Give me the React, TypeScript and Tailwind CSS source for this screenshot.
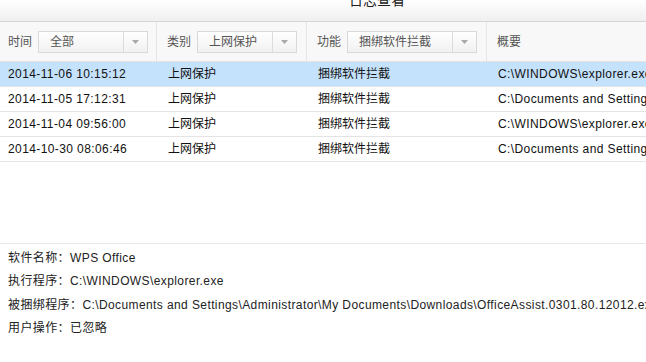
import React from 'react'

const FONT = '"Liberation Sans", "Noto Sans CJK SC", sans-serif'

const ROWS = [
  { time: '2014-11-06 10:15:12', type: '上网保护', func: '捆绑软件拦截', summary: 'C:\\WINDOWS\\explorer.exe' },
  { time: '2014-11-05 17:12:31', type: '上网保护', func: '捆绑软件拦截', summary: 'C:\\Documents and Settings\\Administrator' },
  { time: '2014-11-04 09:56:00', type: '上网保护', func: '捆绑软件拦截', summary: 'C:\\WINDOWS\\explorer.exe' },
  { time: '2014-10-30 08:06:46', type: '上网保护', func: '捆绑软件拦截', summary: 'C:\\Documents and Settings\\Administrator' },
]

function Select({ value, width, textWidth }: { value: string; width: string; textWidth: string }) {
  return (
    <div className={`flex h-[22px] ${width} border border-[#d9d9d9] bg-gradient-to-b from-white to-[#f1f1f1]`}>
      <div className={`${textWidth} pl-[11px] text-[#555] leading-[20px] border-r border-[#dcdcdc]`}>{value}</div>
      <div className="flex-1 flex items-center justify-center">
        <svg width="7" height="4" viewBox="0 0 7 4"><path d="M0 0h7L3.5 4z" fill="#a8a8a8" /></svg>
      </div>
    </div>
  )
}

export default function App() {
  return (
    <div className="w-[646px] h-[362px] overflow-hidden bg-white text-[12px] text-[#111] tracking-[0.4px]" style={{ fontFamily: FONT }}>
      {/* Title */}
      <div className="h-[22px] overflow-hidden bg-gradient-to-b from-white to-[#efefef] border-b border-[#d6d6d6]">
        <div className="pl-[349px] -mt-[9px] text-[14px] leading-[18px] text-[#222] tracking-normal whitespace-nowrap">日志查看</div>
      </div>

      {/* Filters */}
      <div className="flex h-[40px] bg-[#f8f8f8] border-b border-[#e3e3e3] text-[#555] tracking-normal">
        <div className="w-[157px] flex items-center pl-[8px] gap-[6px] border-r border-[#e6e6e6]">
          <span>时间</span>
          <Select value="全部" width="w-[110px]" textWidth="w-[85px]" />
        </div>
        <div className="w-[150px] flex items-center pl-[10px] gap-[6px] border-r border-[#e6e6e6]">
          <span>类别</span>
          <Select value="上网保护" width="w-[100px]" textWidth="w-[75px]" />
        </div>
        <div className="w-[180px] flex items-center pl-[10px] gap-[6px] border-r border-[#e6e6e6]">
          <span>功能</span>
          <Select value="捆绑软件拦截" width="w-[130px]" textWidth="w-[105px]" />
        </div>
        <div className="flex-1 flex items-center pl-[10px]">概要</div>
      </div>

      {/* Rows */}
      <div className="h-[182px] border-b border-[#e8e8e8]">
        {ROWS.map((r, i) => (
          <div
            key={r.time}
            className={`flex h-[25px] items-center border-b border-[#e4e4e4] whitespace-nowrap ${i === 0 ? 'bg-[#c5e2fc]' : ''}`}
          >
            <div className="w-[160px] pl-[8px]">{r.time}</div>
            <div className="w-[150px] pl-[8px] tracking-normal">{r.type}</div>
            <div className="w-[180px] pl-[8px] tracking-normal">{r.func}</div>
            <div className="flex-1 pl-[8px] overflow-hidden">{r.summary}</div>
          </div>
        ))}
      </div>

      {/* Detail */}
      <div className="pl-[8px] pt-[3px] leading-[23.4px] whitespace-nowrap text-[#222]">
        <div>软件名称：WPS Office</div>
        <div>执行程序：C:\WINDOWS\explorer.exe</div>
        <div>被捆绑程序：C:\Documents and Settings\Administrator\My Documents\Downloads\OfficeAssist.0301.80.12012.exe</div>
        <div>用户操作：已忽略</div>
      </div>
    </div>
  )
}
